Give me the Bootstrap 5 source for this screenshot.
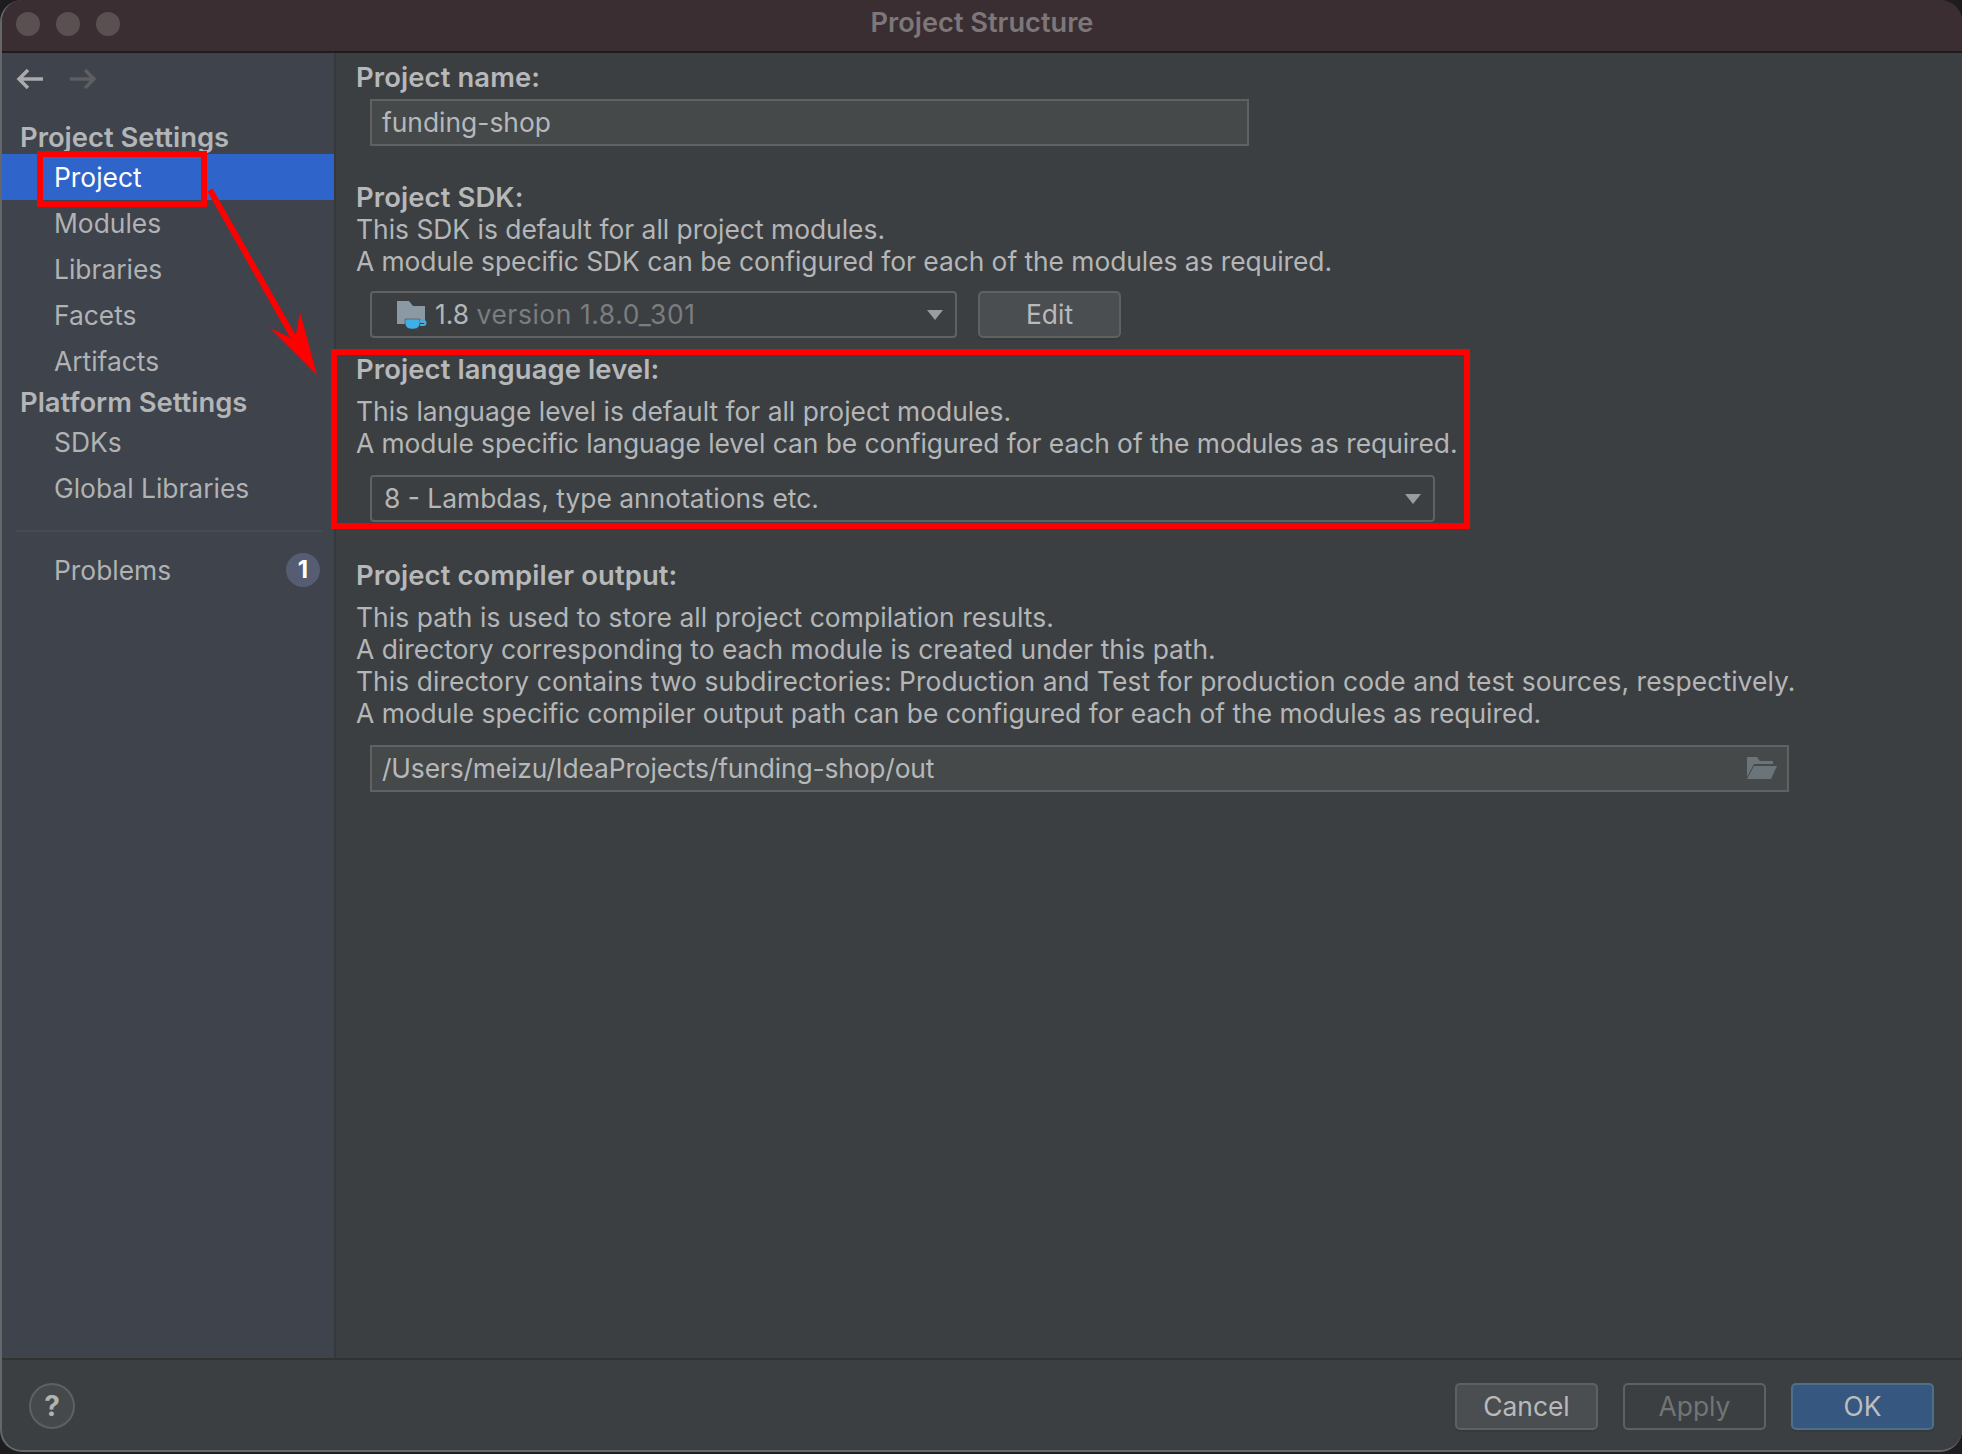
<!DOCTYPE html>
<html lang="en">
<head>
  <meta charset="UTF-8" />
  <title>Project Structure</title>
  <link rel="stylesheet" href="https://cdn.jsdelivr.net/npm/bootstrap@5.3.0/dist/css/bootstrap.min.css" />
  <style>
    html, body { margin: 0; height: 1454px; background: #1d1d1f; overflow: hidden; }
    body { font-family: Inter, "Noto Sans", sans-serif; font-size: 26.4px; color: #b9bbbd; }
    .ij-window { position: relative; width: 1962px; height: 1452px; background: #3c3f41; border-radius: 22px; overflow: hidden; border-left: 2px solid #63676a; border-bottom: 2px solid #63676a; }
    .ij-title { height: 53px; padding-bottom: 5px; background: #3a2e32; border-bottom: 2px solid #1f1c1e; color: #7d777a; font-weight: 600; font-size: 27.2px; position: relative; }
    .ij-lights { position: absolute; left: 14px; top: 12px; gap: 16px; }
    .ij-light { width: 24px; height: 24px; border-radius: 50%; background: #5a5052; }
    .ij-body { height: 1305px; }
    .ij-side { width: 332px; flex: none; background: #3f434b; border-right: 2px solid #36393c; box-sizing: content-box; }
    .ij-arrows { height: 66px; padding: 15px 0 0 14px; gap: 25px; }
    .ij-group { font-weight: 600; font-size: 27.4px; color: #b3b5b7; padding-left: 18px; line-height: 33px; }
    .ij-item { height: 46px; line-height: 46px; padding-left: 52px; color: #b0b2b4; }
    .ij-item.active { background: #2f65ca; color: #fff; }
    .ij-rule { height: 2px; background: #4a4b4e; margin: 19px 12px 15px 14px; }
    .ij-count { position: absolute; right: 14px; top: 6px; width: 34px; height: 34px; border-radius: 50%; background: #565d73; color: #fff; font-weight: 700; font-size: 24px; line-height: 34px; text-align: center; }
    .ij-main { padding: 5px 0 0 20px; flex: 1; }
    .ij-label { font-weight: 600; font-size: 27.4px; letter-spacing: .12px; color: #b6b8ba; line-height: 38px; }
    .ij-text { line-height: 32px; color: #b4b6b8; }
    .ij-tight { letter-spacing: -.05px; }
    .ij-loose { letter-spacing: .07px; }
    .ij-path { letter-spacing: -.15px; }
    .ij-field { height: 47px; margin-left: 14px; border: 2px solid #5f6163; background: #45494a; padding: 0 10px; line-height: 43px; color: #b6b8ba; }
    .ij-combo { height: 47px; margin-left: 14px; border: 2px solid #5f6163; border-radius: 4px; padding: 0 12px; line-height: 43px; color: #b4b6b8; }
    .ij-caret { width: 0; height: 0; border-left: 8.5px solid transparent; border-right: 8.5px solid transparent; border-top: 10px solid #9a9c9e; }
    .ij-muted { color: #7b7d7f; letter-spacing: .58px; }
    .ij-btn { width: 143px; height: 47px; border: 2px solid #5e6062; border-radius: 5px; background: #4b4e50; color: #b8babc; padding: 0; line-height: 43px; text-align: center; box-shadow: 0 2px 0 #37393b; }
    .ij-btn.off { background: transparent; color: #727476; box-shadow: none; }
    .ij-btn.ok { background: #365880; border-color: #4c708c; color: #bbbdbf; }
    .ij-foot { height: 92px; border-top: 2px solid #323232; padding: 23px 28px 0 27px; }
    .ij-help { width: 46px; height: 46px; border-radius: 50%; border: 2px solid #5e6062; background: #46494b; color: #b0b2b4; font-weight: 700; font-size: 28px; line-height: 42px; text-align: center; }
    .ij-marks { position: absolute; left: -2px; top: 0; pointer-events: none; }
  </style>
</head>
<body>
  <div class="ij-window">
    <div class="ij-title d-flex align-items-center justify-content-center">
      <div class="ij-lights d-flex"><span class="ij-light"></span><span class="ij-light"></span><span class="ij-light"></span></div>
      Project Structure
    </div>

    <div class="ij-body d-flex">
      <!-- sidebar -->
      <div class="ij-side">
        <div class="ij-arrows d-flex">
          <svg width="28" height="22" viewBox="0 0 28 22" fill="none" stroke="#a9abad" stroke-width="3.5"><path d="M27 11H3M12 2 3 11l9 9"/></svg>
          <svg width="28" height="22" viewBox="0 0 28 22" fill="none" stroke="#5c5e60" stroke-width="3.5"><path d="M1 11h24M16 2l9 9-9 9"/></svg>
        </div>
        <div class="ij-group" style="margin-top:2px">Project Settings</div>
        <div class="ij-item active">Project</div>
        <div class="ij-item">Modules</div>
        <div class="ij-item">Libraries</div>
        <div class="ij-item">Facets</div>
        <div class="ij-item">Artifacts</div>
        <div class="ij-group" style="margin-top:2px">Platform Settings</div>
        <div class="ij-item">SDKs</div>
        <div class="ij-item">Global Libraries</div>
        <div class="ij-rule"></div>
        <div class="ij-item position-relative">Problems<span class="ij-count">1</span></div>
      </div>

      <!-- content -->
      <div class="ij-main">
        <div class="ij-label">Project name:</div>
        <div class="ij-field" style="width:879px;margin-top:3px">funding-shop</div>

        <div class="ij-label" style="margin-top:32px;margin-bottom:-3px">Project SDK:</div>
        <div class="ij-text">This SDK is default for all project modules.</div>
        <div class="ij-text ij-tight">A module specific SDK can be configured for each of the modules as required.</div>
        <div class="d-flex" style="margin-top:14px">
          <div class="ij-combo d-flex align-items-center" style="width:587px;padding-left:25px">
            <svg width="30" height="28" viewBox="0 0 30 28"><path d="M0 0h12l4 5h12v17H8v1H0z" fill="#8b99a5"/><path d="M8 18h15v4a6 6 0 0 1-6 6h-3a6 6 0 0 1-6-6z" fill="#3fb0e6" stroke="#3c3f41" stroke-width=".5"/><path d="M23 20h3.5a2 2 0 0 1 0 4H23" fill="none" stroke="#3fb0e6" stroke-width="2"/></svg>
            <span class="ms-2">1.8 <span class="ij-muted">version 1.8.0_301</span></span>
            <span class="ij-caret ms-auto"></span>
          </div>
          <div class="ij-btn" style="margin-left:21px">Edit</div>
        </div>

        <div class="ij-label" style="margin-top:12px">Project language level:</div>
        <div class="ij-text" style="margin-top:7px">This language level is default for all project modules.</div>
        <div class="ij-text ij-tight">A module specific language level can be configured for each of the modules as required.</div>
        <div class="ij-combo d-flex align-items-center" style="width:1065px;margin-top:16px">
          8 - Lambdas, type annotations etc.
          <span class="ij-caret ms-auto"></span>
        </div>

        <div class="ij-label" style="margin-top:34px">Project compiler output:</div>
        <div class="ij-text ij-loose" style="margin-top:7px">This path is used to store all project compilation results.</div>
        <div class="ij-text">A directory corresponding to each module is created under this path.</div>
        <div class="ij-text ij-loose">This directory contains two subdirectories: Production and Test for production code and test sources, respectively.</div>
        <div class="ij-text">A module specific compiler output path can be configured for each of the modules as required.</div>
        <div class="ij-field d-flex align-items-center justify-content-between" style="width:1419px;margin-top:16px">
          <span class="ij-path">/Users/meizu/IdeaProjects/funding-shop/out</span>
          <svg width="30" height="23" viewBox="0 0 30 23" fill="#6b7478"><path d="M0 0h10l3 4h13v3H7L0 20z"/><path d="M7 9h23l-6 13H0z"/></svg>
        </div>
      </div>
    </div>

    <!-- footer -->
    <div class="ij-foot d-flex">
      <div class="ij-help">?</div>
      <div class="ms-auto d-flex" style="gap:25px">
        <div class="ij-btn">Cancel</div>
        <div class="ij-btn off">Apply</div>
        <div class="ij-btn ok">OK</div>
      </div>
    </div>

    <!-- red annotations drawn over the screenshot -->
    <svg class="ij-marks" width="1962" height="1454" viewBox="0 0 1962 1454" fill="none">
      <rect x="40" y="154" width="164" height="50" stroke="#fe0000" stroke-width="6"/>
      <rect x="334" y="352" width="1133" height="174" stroke="#fe0000" stroke-width="6"/>
      <path d="M210 190 295 340" stroke="#fe0000" stroke-width="6"/>
      <path d="M317 375 270 328 295 340 300 312z" fill="#fe0000"/>
    </svg>
  </div>
</body>
</html>
